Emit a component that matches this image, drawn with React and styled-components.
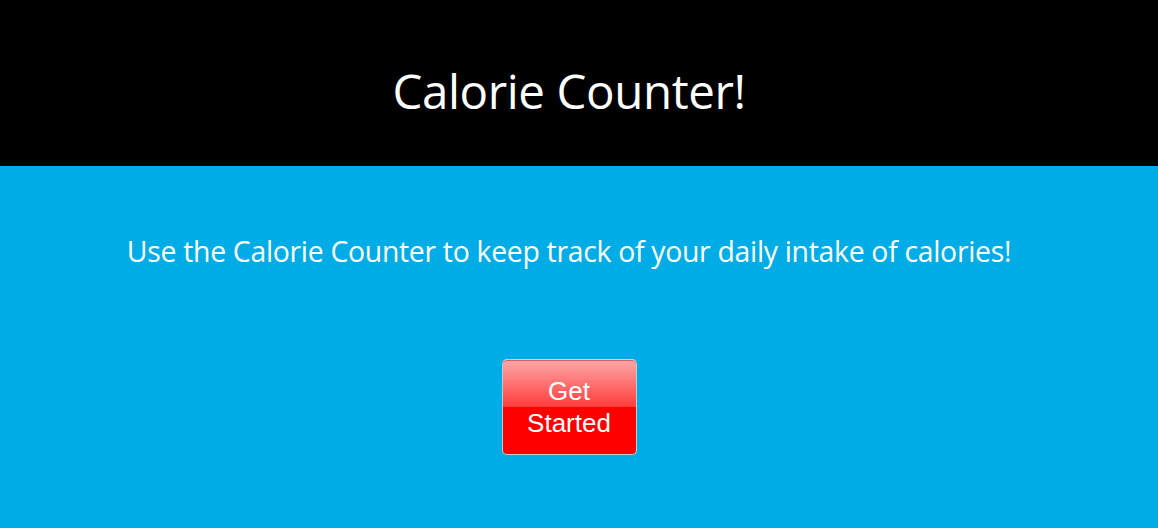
import React from "react";
import styled, { createGlobalStyle } from "styled-components";

const Global = createGlobalStyle`
  html, body { margin: 0; padding: 0; }
  body { background: #00ace6; }
`;

const Page = styled.div`
  width: 1158px;
  height: 528px;
  background: #00ace6;
  overflow: hidden;
  font-family: "Open Sans", sans-serif;
`;

const Header = styled.header`
  height: 166px;
  box-sizing: border-box;
  padding: 14px 20px 0 0;
  background: #000;
  display: flex;
  align-items: center;
  justify-content: center;
`;

const Title = styled.h1`
  margin: 0;
  color: #fff;
  font-size: 47.5px;
  font-weight: 500;
  letter-spacing: -0.4px;
`;

const Main = styled.main`
  display: flex;
  flex-direction: column;
  align-items: center;
  padding: 66px 20px 0 0;
`;

const Intro = styled.p`
  margin: 0;
  color: #fff;
  font-size: 28.4px;
  line-height: 38px;
  letter-spacing: -0.3px;
`;

const StartButton = styled.button`
  margin-top: 89px;
  width: 135px;
  height: 96px;
  border: 1px solid #c8c8c8;
  border-top-color: #d0d0d0;
  border-radius: 5px;
  box-shadow: inset 0 1px 0 #e06060;
  color: #fff;
  font-family: "Liberation Sans", Arial, sans-serif;
  font-size: 26px;
  line-height: 32px;
  padding: 0 12px;
  background: linear-gradient(to bottom, #ffa8a8 0%, #ff3c3c 50%, #ff0000 50%, #ff0000 100%);
  cursor: pointer;
`;

export default function App() {
  return (
    <Page>
      <Global />
      <Header>
        <Title>Calorie Counter!</Title>
      </Header>
      <Main>
        <Intro>Use the Calorie Counter to keep track of your daily intake of calories!</Intro>
        <StartButton>Get Started</StartButton>
      </Main>
    </Page>
  );
}
